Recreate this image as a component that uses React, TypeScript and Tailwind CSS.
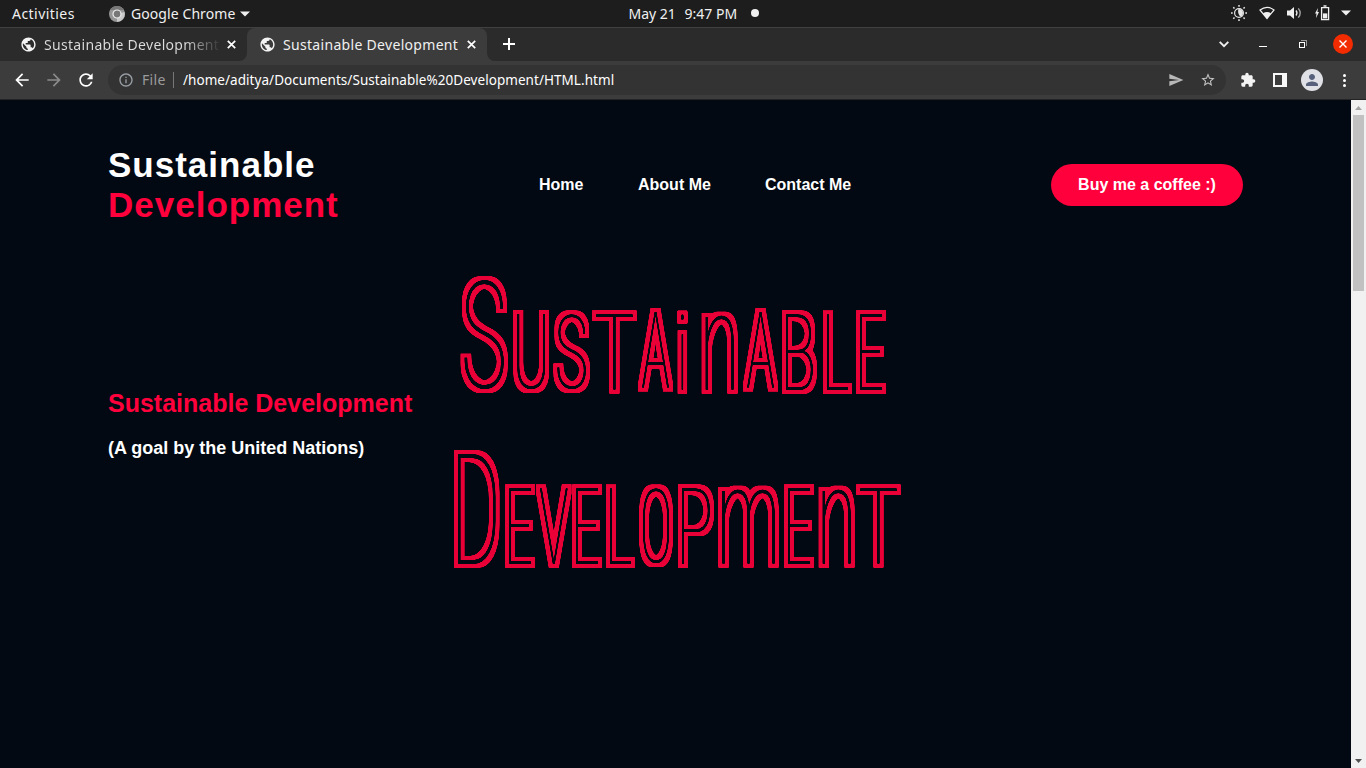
import {
  MdArrowBack,
  MdArrowForward,
  MdExtension,
  MdInfoOutline,
  MdPerson,
  MdPublic,
  MdRefresh,
  MdSend,
  MdStarBorder,
} from "react-icons/md";

type Letter = { ch: string; x1: number; x2: number; y1?: number };

const SUSTAINABLE: Letter[] = [
  { ch: "S", x1: 460, x2: 508, y1: 275 },
  { ch: "U", x1: 513, x2: 549 },
  { ch: "S", x1: 553, x2: 590 },
  { ch: "T", x1: 592, x2: 637 },
  { ch: "A", x1: 638, x2: 673 },
  { ch: "i", x1: 677, x2: 688 },
  { ch: "n", x1: 701, x2: 738 },
  { ch: "A", x1: 743, x2: 778 },
  { ch: "B", x1: 782, x2: 817 },
  { ch: "L", x1: 823, x2: 852 },
  { ch: "E", x1: 856, x2: 886 },
];

const DEVELOPMENT: Letter[] = [
  { ch: "D", x1: 454, x2: 500, y1: 275 },
  { ch: "E", x1: 505, x2: 535 },
  { ch: "V", x1: 536, x2: 572 },
  { ch: "E", x1: 572, x2: 602 },
  { ch: "L", x1: 606, x2: 635 },
  { ch: "O", x1: 639, x2: 673 },
  { ch: "P", x1: 678, x2: 714 },
  { ch: "m", x1: 718, x2: 779 },
  { ch: "E", x1: 784, x2: 814 },
  { ch: "n", x1: 818, x2: 855 },
  { ch: "T", x1: 856, x2: 901 },
];

const INSET = 4;
const TOP = 230;
const FONT = "100 100px Roboto, sans-serif";

// Stretches a glyph so that its ink fills the letter's slot.
function fitGlyph(ctx: CanvasRenderingContext2D, l: Letter) {
  const m = ctx.measureText(l.ch);
  const w = m.actualBoundingBoxRight + m.actualBoundingBoxLeft;
  const h = m.actualBoundingBoxAscent + m.actualBoundingBoxDescent;
  const top = (l.y1 ?? 310) + INSET - TOP;
  const left = l.x1 + INSET - 440;
  const sx = (l.x2 - l.x1 - INSET * 2) / w;
  const sy = (393.5 - INSET - TOP - top) / h;
  const tx = left + m.actualBoundingBoxLeft * sx;
  const ty = top + m.actualBoundingBoxAscent * sy;
  return `matrix(${sx} 0 0 ${sy} ${tx} ${ty})`;
}

function Wordmark({ letters, id }: { letters: Letter[]; id: string }) {
  const ctx = document.createElement("canvas").getContext("2d")!;
  ctx.font = FONT;
  ctx.fontStretch = "condensed";
  return (
    <svg width="470" height="220" viewBox="0 0 470 220" className="block overflow-visible">
      <defs>
        <filter id={id} x="0" y="0" width="470" height="220" filterUnits="userSpaceOnUse" colorInterpolationFilters="sRGB">
          <feComponentTransfer in="SourceAlpha" result="core">
            <feFuncA type="linear" slope="2.2" intercept="0" />
          </feComponentTransfer>
          <feMorphology in="core" operator="dilate" radius="4" result="wide" />
          <feFlood floodColor="#e80036" />
          <feComposite in2="wide" operator="in" result="red" />
          <feComposite in="red" in2="core" operator="out" result="lines" />
          <feGaussianBlur in="lines" stdDeviation="0.4" />
        </filter>
      </defs>
      <g filter={`url(#${id})`}>
        {letters.map((l, i) => (
          <text
            key={i}
            transform={fitGlyph(ctx, l)}
            className="font-[Roboto,sans-serif] text-[100px] font-thin font-stretch-condensed"
          >
            {l.ch}
          </text>
        ))}
      </g>
    </svg>
  );
}

function CloseMark() {
  return (
    <svg className="ml-[7px] shrink-0" width="9" height="9" viewBox="0 0 9 9">
      <path d="m.8.8 7.4 7.4m0-7.4L.8 8.2" stroke="#fff" strokeWidth="1.7" />
    </svg>
  );
}

function Tab({ active }: { active?: boolean }) {
  return (
    <div
      className={
        active
          ? "flex h-full w-[240px] items-center rounded-t-lg bg-[#3c3c3c] pb-px pl-3"
          : "flex h-full w-[239px] items-center pb-px pl-3"
      }
    >
      <MdPublic className="size-[17px] shrink-0 text-[#f4f4f4]" />
      <span
        className={
          active
            ? "ml-[7px] w-[177px] overflow-hidden text-[14px] tracking-[0.31px] whitespace-nowrap text-[#f0f0f0]"
            : "ml-[7px] w-[176px] overflow-hidden bg-linear-to-r from-[#dedede] from-80% to-[#333] bg-clip-text text-[14px] tracking-[0.31px] whitespace-nowrap text-transparent"
        }
      >
        Sustainable Development
      </span>
      <CloseMark />
    </div>
  );
}

function TopBar() {
  return (
    <div className="grid h-[27px] shrink-0 grid-cols-[1fr_auto_1fr] items-center bg-[#1d1d1d] text-[14px] text-[#f0f0f0]">
      <div className="flex items-center pl-3">
        <span className="w-[97px] tracking-[0.45px]">Activities</span>
        <svg width="16" height="16" viewBox="0 0 16 16">
          <circle cx="8" cy="8" r="8" fill="#969696" />
          <path d="M8 8 15.5 6A8 8 0 0 1 8 16Z" fill="#c9c9c9" />
          <path d="M1 4A8 8 0 0 1 15 4Z" fill="#777" />
          <circle cx="8" cy="8" r="4" fill="#777" stroke="#ededed" strokeWidth="1.2" />
        </svg>
        <span className="ml-[6px] w-[109px] tracking-[0.08px] whitespace-nowrap">Google Chrome</span>
        <svg width="10" height="6" viewBox="0 0 10 6"><path d="M0 .5h10L5 5.5Z" fill="#f0f0f0" /></svg>
      </div>
      <div className="flex items-center pb-px">
        <span className="w-[56px] whitespace-nowrap">May 21</span>
        <span className="w-[66px] whitespace-nowrap">9:47 PM</span>
        <span className="mr-[-21px] size-2 rounded-full bg-[#f0f0f0]" />
      </div>
      <div className="flex items-center justify-end pr-[15px] pb-px">
        <svg width="16" height="16" viewBox="0 0 16 16" fill="none" stroke="#e8e8e8">
          <circle cx="8" cy="8" r="4.4" strokeWidth="1.2" />
          <path d="M7.5 4A4.2 4.2 0 0 1 12 8a4.3 4.3 0 0 1-2 3.7C7.5 10.500 6.500 7 7.500 4Z" fill="#e8e8e8" stroke="none" />
          <path d="M8 0v1.7M8 14.3V16M0 8h1.700M14.300 8H16M2.300 2.300l1.200 1.200M12.500 12.500l1.200 1.200M2.300 13.700l1.200-1.200M12.500 3.500l1.200-1.200" strokeWidth="1.5" />
        </svg>
        <svg className="ml-3" width="16" height="14" viewBox="0 0 16 14">
          <path d="M1 4Q8-1.4 15 4L8 12.5Z" fill="none" stroke="#efefef" strokeWidth="1.2" />
          <path d="M4 7.3Q8 4.8 12 7.3L8 12.7Z" fill="#efefef" />
        </svg>
        <svg className="ml-3" width="16" height="14" viewBox="0 0 16 14" fill="none" stroke="#efefef" strokeWidth="1.3">
          <path d="M0 4.500h3L7 1v12L3 9.500H0Z" fill="#efefef" stroke="none" />
          <path d="M9 4.500q2 2.500 0 5" />
          <path d="M11.300 2.300q3.800 4.700 0 9.400" stroke="#aaa" />
        </svg>
        <svg className="ml-3" width="15" height="16" viewBox="0 0 15 16">
          <path d="M3 3 0 8.500h1.500L1 13 4 7H2.400Z" fill="#efefef" />
          <path d="M6.600 2.700h7v12h-7ZM8.500 1h3" fill="none" stroke="#efefef" strokeWidth="1.3" />
          <path d="M8 8.400h4.300v5H8Z" fill="#efefef" />
        </svg>
        <svg className="ml-[11px]" width="10" height="6" viewBox="0 0 10 6"><path d="M0 .5h10L5 5.5Z" fill="#f0f0f0" /></svg>
      </div>
    </div>
  );
}

function TabStrip() {
  return (
    <div className="flex h-[34px] shrink-0 items-center border-t border-[#404040] bg-[#2b2b2b]">
      <div className="flex h-full w-[247px] bg-[#3c3c3c]">
        <div className="flex h-full w-full rounded-br-lg bg-[#2b2b2b] pl-2">
          <Tab />
        </div>
      </div>
      <Tab active />
      <div className="h-full flex-1 bg-[#3c3c3c]">
        <div className="flex h-full items-center rounded-bl-lg bg-[#2b2b2b] pr-[13px] pb-px pl-4">
          <svg width="12" height="12" viewBox="0 0 12 12"><path d="M6 0v12M0 6h12" stroke="#fff" strokeWidth="2" /></svg>
          <svg className="ml-auto" width="10" height="7" viewBox="0 0 10 7" fill="none">
            <path d="m.7.9 4.300 4.300L9.300.9" stroke="#f0f0f0" strokeWidth="1.9" />
          </svg>
          <span className="mt-[5px] ml-[30px] h-px w-2 bg-white" />
          <svg className="ml-[31px]" width="10" height="10" viewBox="0 0 10 10" fill="none" shapeRendering="crispEdges">
            <path d="M3 1.500h5.500V7" stroke="#999" />
            <rect x="1.5" y="3.5" width="5" height="5" stroke="#fff" />
          </svg>
          <span className="ml-[25px] flex size-5 items-center justify-center rounded-full bg-[#f22c00]">
            <svg width="8" height="8" viewBox="0 0 8 8"><path d="m.5.5 7 7m0-7-7 7" stroke="#fff" strokeWidth="1.4" /></svg>
          </span>
        </div>
      </div>
    </div>
  );
}

function Toolbar() {
  return (
    <div className="flex h-[39px] shrink-0 items-center border-b border-[#242424] bg-[#3c3c3c] pl-3 text-[14px]">
      <MdArrowBack className="size-5 text-white" />
      <MdArrowForward className="ml-3 size-5 text-[#8a8a8a]" />
      <MdRefresh className="ml-3 size-5 text-white" />
      <div className="ml-3 flex h-[30px] w-[1118px] items-center rounded-full bg-[#333] pl-[10px]">
        <MdInfoOutline className="size-4 text-[#9aa0a6]" />
        <span className="ml-2 w-[31px] pb-px tracking-[0.3px] text-[#9b9b9b]">File</span>
        <span className="h-4 w-px bg-[#777]" />
        <span className="ml-[9px] text-[13.5px] tracking-[0.05px] whitespace-nowrap text-white">
          /home/aditya/Documents/Sustainable%20Development/HTML.html
        </span>
        <MdSend className="ml-auto size-4 text-[#b8b8b8]" />
        <MdStarBorder className="mr-[10px] ml-4 size-4 text-[#c4c4c4]" />
      </div>
      <MdExtension className="ml-[14px] size-4 text-[#f4f4f4]" />
      <span className="ml-[17px] h-[14px] w-[14px] border-2 border-r-[5px] border-[#f8f8f8]" />
      <span className="ml-[14px] flex size-[22px] items-center justify-center rounded-full bg-[#dfe1e6]">
        <MdPerson className="size-[18px] text-[#58617c]" />
      </span>
      <span className="ml-5 flex flex-col gap-[2px]">
        <span className="size-[3px] rounded-full bg-white" />
        <span className="size-[3px] rounded-full bg-white" />
        <span className="size-[3px] rounded-full bg-white" />
      </span>
    </div>
  );
}

function Page() {
  return (
    <main className="flex-1 pt-[45px] pl-[108px] font-['Liberation_Sans',Arial,sans-serif] font-bold text-white">
      <header className="flex h-20 w-[1135px] items-center">
        <h1 className="w-[431px] text-[35px] leading-10 tracking-[1px]">
          Sustainable
          <br />
          <span className="text-[#ff003c]">Development</span>
        </h1>
        <nav className="flex text-[16px]">
          <a className="w-[99px]">Home</a>
          <a className="w-[127px]">About Me</a>
          <a>Contact Me</a>
        </nav>
        <button className="ml-auto h-[42px] w-[192px] rounded-full bg-[#ff003c] text-[16px]">Buy me a coffee :)</button>
      </header>
      <section className="flex pt-[5px]">
        <div className="w-[332px] shrink-0 pt-[158px]">
          <h2 className="text-[25px] leading-[30px] whitespace-nowrap text-[#ff003c]">Sustainable Development</h2>
          <p className="mt-[19px] text-[18px] leading-[22px]">(A goal by the United Nations)</p>
        </div>
        <div className="flex flex-col -space-y-[46px]">
          <Wordmark letters={SUSTAINABLE} id="sustainable" />
          <Wordmark letters={DEVELOPMENT} id="development" />
        </div>
      </section>
    </main>
  );
}

export default function App() {
  return (
    <div className="flex h-[768px] w-[1366px] flex-col overflow-hidden bg-[#020912] font-['Noto_Sans',sans-serif]">
      <TopBar />
      <TabStrip />
      <Toolbar />
      <div className="flex min-h-0 flex-1">
        <Page />
        <aside className="flex w-[15px] flex-col items-center bg-[#f1f1f1]">
          <span className="flex h-[15px] items-center">
            <svg width="7" height="4" viewBox="0 0 7 4"><path d="M3.5 0 7 4H0Z" fill="#a3a3a3" /></svg>
          </span>
          <span className="h-[176px] w-[11px] bg-[#c1c1c1]" />
          <span className="mt-auto flex h-[15px] items-center">
            <svg width="7" height="4" viewBox="0 0 7 4"><path d="M0 0h7L3.5 4Z" fill="#505050" /></svg>
          </span>
        </aside>
      </div>
    </div>
  );
}
